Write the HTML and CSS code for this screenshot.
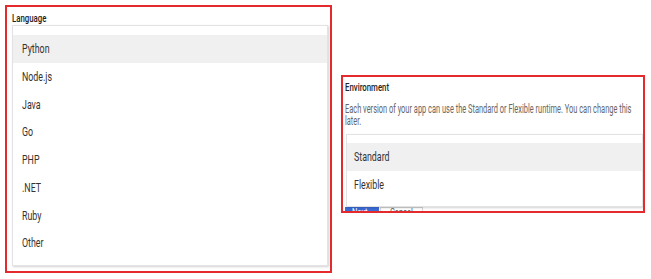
FILE: index.html
```html
<!DOCTYPE html>
<html>
<head>
<meta charset="utf-8">
<link rel="stylesheet" href="styles.css">
</head>
<body>
<div class="page">
  <section class="panel lang">
    <div class="label"><span class="sq">Language</span></div>
    <ul class="menu lang-menu">
      <li class="item active"><span class="sq">Python</span></li>
      <li class="item"><span class="sq">Node.js</span></li>
      <li class="item"><span class="sq">Java</span></li>
      <li class="item"><span class="sq">Go</span></li>
      <li class="item"><span class="sq">PHP</span></li>
      <li class="item"><span class="sq">.NET</span></li>
      <li class="item"><span class="sq">Ruby</span></li>
      <li class="item"><span class="sq">Other</span></li>
    </ul>
  </section>
  <section class="panel env">
    <div class="label env-label"><span class="sq">Environment</span></div>
    <p class="desc"><span class="sq narrow">Each version of your app can use the Standard or Flexible runtime. You can change this</span><br><span class="sq narrow">later.</span></p>
    <ul class="menu env-menu">
      <li class="item active"><span class="sq">Standard</span></li>
      <li class="item"><span class="sq">Flexible</span></li>
    </ul>
    <div class="buttons">
      <span class="btn primary"><span class="sq">Next</span></span>
      <span class="btn cancel"><span class="sq">Cancel</span></span>
    </div>
  </section>
</div>
</body>
</html>
```

FILE: styles.css
```css
* { box-sizing: border-box; }
html, body { margin: 0; padding: 0; background: #fff; }
body { font-family: Roboto, "Liberation Sans", sans-serif; color: #333; }
.page { display: flex; align-items: flex-start; gap: 9px; padding: 5px 0 0 5px; }
.sq { display: inline-block; transform: scaleX(0.68); transform-origin: 0 50%; white-space: nowrap; }
.sq.narrow { transform: scaleX(0.62); }
.panel { border: 2px solid #e42a2c; background: #fff; }
.lang { width: 327px; height: 268px; padding: 5px 2px 0 5px; }
.label { font-size: 11.5px; font-weight: 500; color: #222; height: 13px; line-height: 12px; }
.menu { list-style: none; margin: 0; background: #fff; border: 1px solid #e3e3e3; box-shadow: 1px 1px 2px rgba(0,0,0,0.18); position: relative; }
.lang-menu { height: 241px; padding: 9px 0 0 0; }
.item { height: 27.75px; line-height: 27.75px; font-size: 13px; color: #333; padding-left: 9px; }
.item.active { background: #f0f0f0; }
.env { width: 304px; height: 138px; margin-top: 70px; padding: 3px 0 0 2px; overflow: hidden; }
.env-label { height: 20px; line-height: 14px; font-size: 11.5px; }
.desc { margin: 0; font-size: 12px; line-height: 12px; color: #666; height: 34px; padding-top: 3px; overflow: hidden; }
.env-menu { height: 73px; padding: 8px 0 0 0; margin-left: 1px; }
.env-menu .item { height: 28px; line-height: 28px; padding-left: 7px; }
.buttons { display: flex; gap: 1px; }
.btn { display: inline-block; height: 22px; border: 1px solid #d6d6d6; font-size: 11px; line-height: 10px; color: #555; overflow: hidden; }
.btn.primary { width: 34px; background: #3b6bd6; border-color: #3b6bd6; color: #fff; padding-left: 6px; }
.btn.cancel { width: 43px; padding-left: 9px; }
```
